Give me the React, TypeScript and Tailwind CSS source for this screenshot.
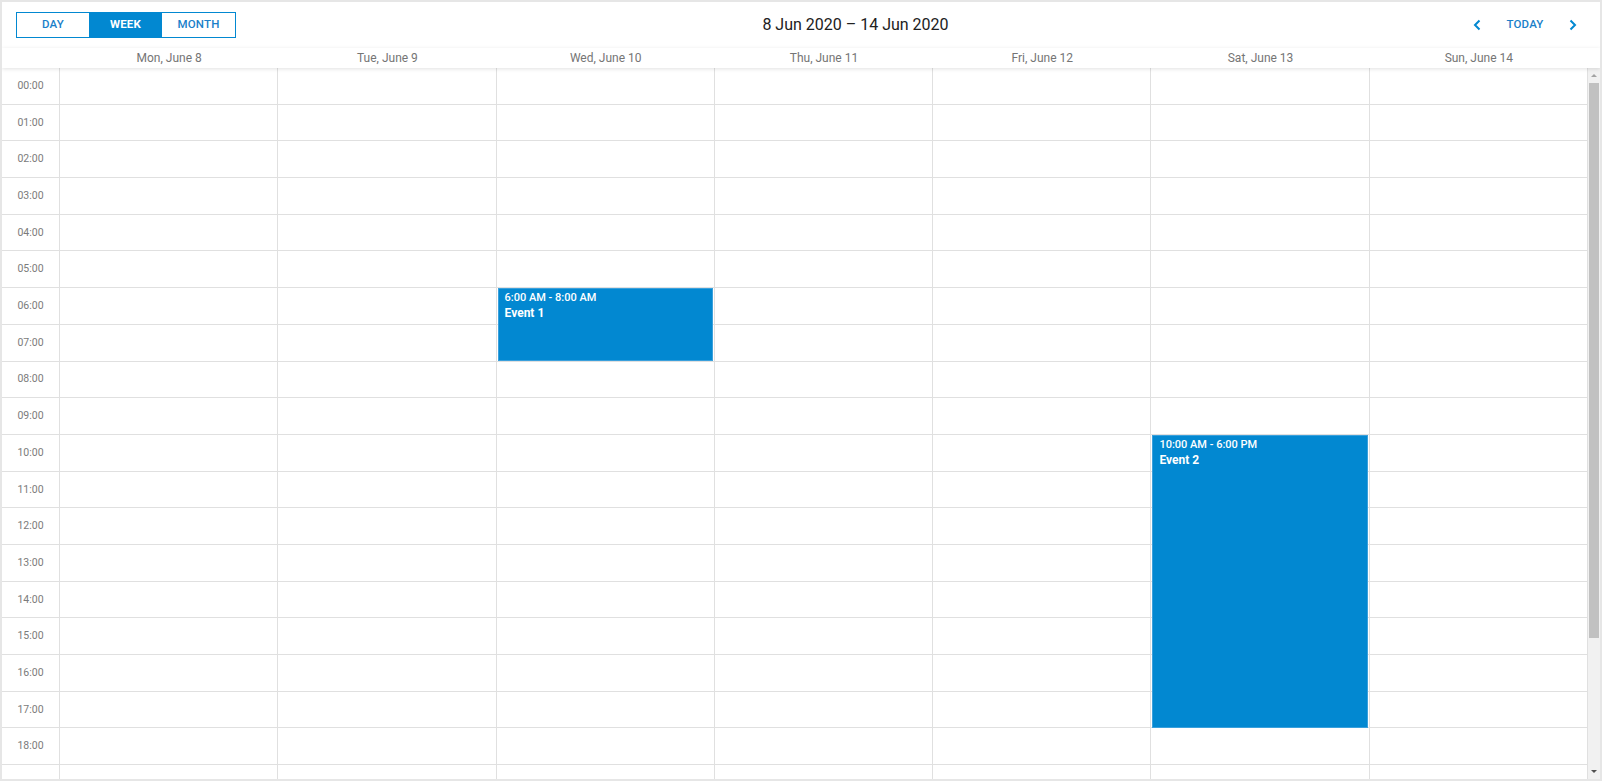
import React from "react";

const days = [
  "Mon, June 8",
  "Tue, June 9",
  "Wed, June 10",
  "Thu, June 11",
  "Fri, June 12",
  "Sat, June 13",
  "Sun, June 14",
];

// 19 labelled rows, the 20th row is only partly in view and shows no label
const hours = Array.from({ length: 20 }, (_, i) => `${String(i).padStart(2, "0")}:00`);

const ROW = 36.7;

type Ev = { day: number; start: number; end: number; time: string; title: string };

const events: Ev[] = [
  { day: 2, start: 6, end: 8, time: "6:00 AM - 8:00 AM", title: "Event 1" },
  { day: 5, start: 10, end: 18, time: "10:00 AM - 6:00 PM", title: "Event 2" },
];

function Chevron({ dir }: { dir: "left" | "right" }) {
  return (
    <svg width="8" height="12" viewBox="0 0 8 12" fill="none">
      <polyline
        points={dir === "left" ? "6.5,1.5 2,6 6.5,10.5" : "1.5,1.5 6,6 1.5,10.5"}
        stroke="#0288d1"
        strokeWidth="2"
        strokeLinejoin="miter"
      />
    </svg>
  );
}

export default function App() {
  return (
    <div className="h-[781px] w-[1602px] border-2 border-[#e6e6e6] bg-white flex flex-col font-['Roboto','Liberation_Sans',sans-serif] overflow-hidden">
      {/* toolbar */}
      <div className="h-[46px] shrink-0 flex items-center pl-[14px] pr-[11px]">
        <div className="flex h-[26px]">
          <button className="w-[74px] h-full border border-[#0288d1] text-[11.5px] font-medium text-[#1a7fc9] tracking-[0.2px]">
            DAY
          </button>
          <button className="w-[73px] h-full -ml-px border border-[#0288d1] bg-[#0288d1] text-[11.5px] font-bold text-white tracking-[0.2px]">
            WEEK
          </button>
          <button className="w-[75px] h-full -ml-px border border-[#0288d1] text-[11.5px] font-medium text-[#1a7fc9] tracking-[0.2px]">
            MONTH
          </button>
        </div>
        <div className="flex-1 text-center pl-[14px] text-[16px] text-[#212121]">
          8 Jun 2020 – 14 Jun 2020
        </div>
        <div className="flex items-center h-[26px]">
          <button className="w-[32px] h-full flex items-center justify-center">
            <Chevron dir="left" />
          </button>
          <button className="w-[64px] h-full text-[11.5px] font-medium text-[#1a7fc9] tracking-[0.2px]">
            TODAY
          </button>
          <button className="w-[32px] h-full flex items-center justify-center">
            <Chevron dir="right" />
          </button>
        </div>
      </div>

      {/* day header */}
      <div className="h-[20px] shrink-0 flex relative z-10 bg-white shadow-[0_1px_4px_rgba(0,0,0,0.12)]">
        <div className="w-[58px] shrink-0" />
        {days.map((d) => (
          <div key={d} className="flex-1 flex items-center justify-center text-[12px] text-[#757575]">
            {d}
          </div>
        ))}
        <div className="w-[12px] shrink-0" />
      </div>

      {/* grid */}
      <div className="flex-1 flex overflow-hidden">
        <div className="flex-1 flex overflow-hidden">
          <div className="w-[58px] shrink-0 border-r border-[#e0e0e0]">
            {hours.map((h, i) => (
              <div
                key={h}
                className="h-[36.7px] border-b border-[#e0e0e0] flex items-center justify-center text-[10.5px] text-[#7b7b7b]"
              >
                {i < 19 ? h : null}
              </div>
            ))}
          </div>
          {days.map((d, di) => (
            <div key={d} className="flex-1 relative border-r border-[#e0e0e0]">
              {hours.map((h) => (
                <div key={h} className="h-[36.7px] border-b border-[#e0e0e0]" />
              ))}
              {events
                .filter((e) => e.day === di)
                .map((e) => (
                  <div
                    key={e.title}
                    className="absolute left-px right-px bg-[#0288d1] border border-[#3aa0dc] px-[6px] pt-[2px] text-white"
                    style={{ top: e.start * ROW - 0.5, height: (e.end - e.start) * ROW }}
                  >
                    <div className="text-[11px] font-medium leading-[14px]">{e.time}</div>
                    <div className="text-[12px] font-bold leading-[16px]">{e.title}</div>
                  </div>
                ))}
            </div>
          ))}
        </div>

        {/* scrollbar */}
        <div className="w-[12px] shrink-0 bg-[#f1f1f1] flex flex-col">
          <div className="h-[15px] flex items-center justify-center">
            <div className="w-0 h-0 border-l-[3px] border-r-[3px] border-b-[3px] border-l-transparent border-r-transparent border-b-[#a3a3a3]" />
          </div>
          <div className="h-[555px] mx-px bg-[#c1c1c1]" />
          <div className="flex-1" />
          <div className="h-[15px] flex items-center justify-center">
            <div className="w-0 h-0 border-l-[3px] border-r-[3px] border-t-[3px] border-l-transparent border-r-transparent border-t-[#505050]" />
          </div>
        </div>
      </div>
    </div>
  );
}
